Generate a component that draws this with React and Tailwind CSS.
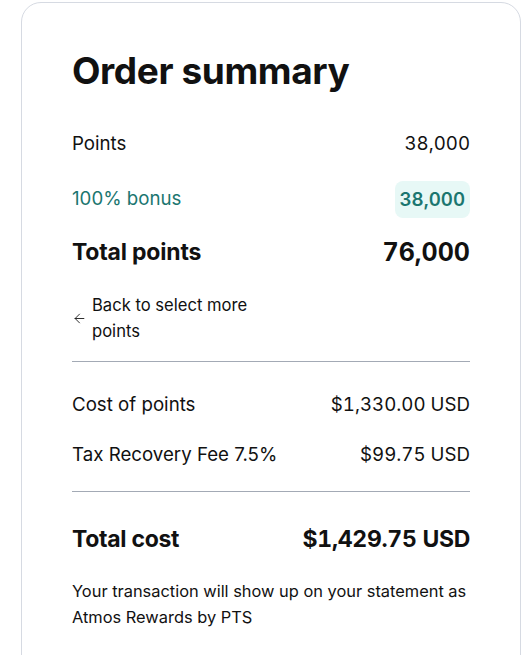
import { ArrowLeft } from "lucide-react";

function Row({ label, value, className = "", valueClass = "" }) {
  return (
    <div className={`flex items-center justify-between ${className}`}>
      <span>{label}</span>
      <span className={`tabular-nums ${valueClass}`}>{value}</span>
    </div>
  );
}

export default function App() {
  return (
    <div
      className="h-[655px] w-[526px] overflow-hidden bg-white pl-[21px] pt-[2px] text-[#111111]"
      style={{ fontFamily: "Inter, 'Liberation Sans', sans-serif" }}
    >
      <div className="w-[500px] rounded-[20px] border border-[#d6dae2] px-[50px] pb-[80px] pt-[46px]">
        <h1 className="text-[37px] font-bold leading-[44px] tracking-[-0.4px]">Order summary</h1>

        <Row label="Points" value="38,000" className="mt-[37px] text-[18.7px] leading-[28px]" />

        <div className="mt-[23px] flex items-center justify-between text-[18.7px] text-[#1b7670]">
          <span>100% bonus</span>
          <span className="rounded-[8px] bg-[#e7f8f6] px-[5px] py-[4px] font-semibold tabular-nums leading-[29px]">
            38,000
          </span>
        </div>

        <Row
          label="Total points"
          value="76,000"
          className="mt-[19px] text-[23px] font-bold leading-[30px] tracking-[-0.2px]"
          valueClass="text-[25px] tracking-[0px]"
        />

        <a href="#" className="mt-[25px] flex w-[190px] items-center gap-[5px] text-[16.6px] leading-[26px]">
          <ArrowLeft size={15} strokeWidth={1.4} className="shrink-0" />
          <span>Back to select more points</span>
        </a>

        <hr className="mt-[17px] border-t border-[#a3aab5]" />

        <Row label="Cost of points" value="$1,330.00 USD" className="mt-[29px] text-[18.7px] leading-[28px]" />
        <Row label="Tax Recovery Fee 7.5%" value="$99.75 USD" className="mt-[22px] text-[18.7px] leading-[28px]" />

        <hr className="mt-[22px] border-t border-[#a3aab5]" />

        <Row
          label="Total cost"
          value="$1,429.75 USD"
          className="mt-[31px] text-[23px] font-bold leading-[32px] tracking-[-0.3px]"
        />

        <p className="mt-[23px] text-[16.4px] leading-[26px]">
          Your transaction will show up on your statement as Atmos Rewards by PTS
        </p>
      </div>
    </div>
  );
}
